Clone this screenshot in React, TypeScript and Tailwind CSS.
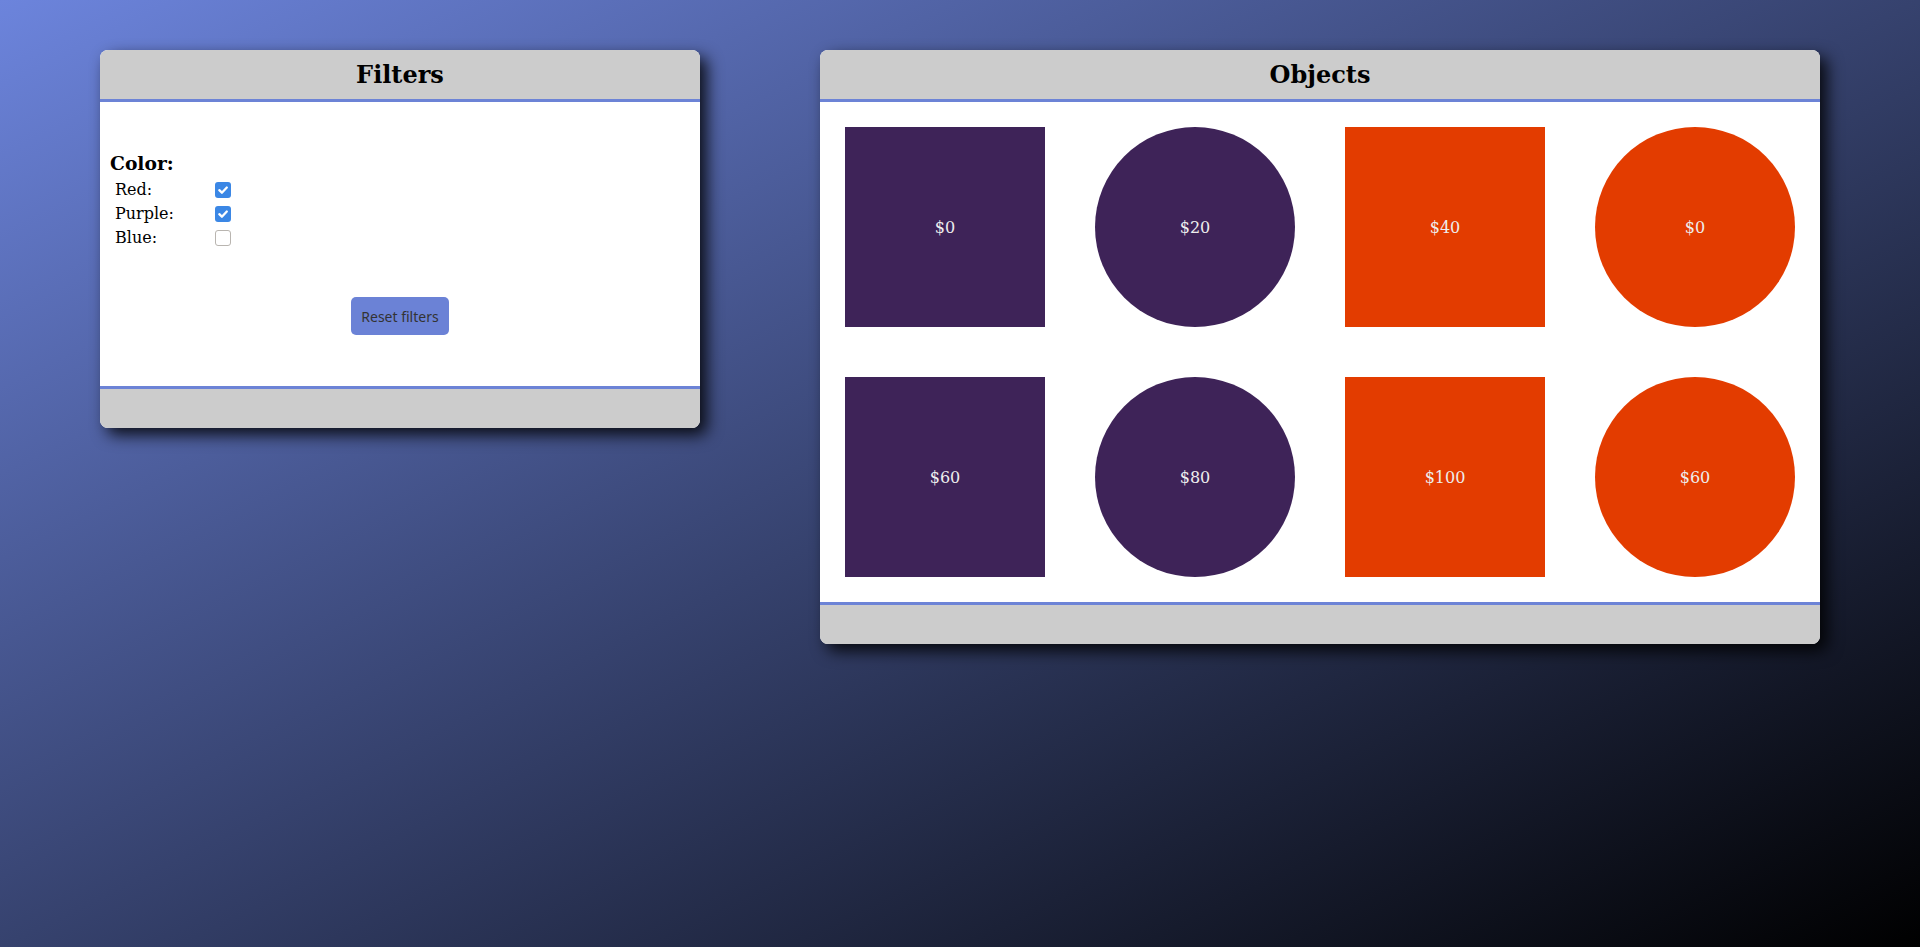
import { useState } from 'react';

type Shape = { kind: 'square' | 'circle'; color: 'purple' | 'red'; price: number };

const objects: Shape[] = [
  { kind: 'square', color: 'purple', price: 0 },
  { kind: 'circle', color: 'purple', price: 20 },
  { kind: 'square', color: 'red', price: 40 },
  { kind: 'circle', color: 'red', price: 0 },
  { kind: 'square', color: 'purple', price: 60 },
  { kind: 'circle', color: 'purple', price: 80 },
  { kind: 'square', color: 'red', price: 100 },
  { kind: 'circle', color: 'red', price: 60 },
];

function Check({ checked, onChange }: { checked: boolean; onChange: () => void }) {
  return (
    <button
      onClick={onChange}
      className={
        checked
          ? 'w-[16px] h-[16px] rounded-[3px] bg-[#3b87e5] flex items-center justify-center'
          : 'w-[16px] h-[16px] rounded-[3px] bg-white border border-[#b9b5b0]'
      }
    >
      {checked && (
        <svg width="12" height="12" viewBox="0 0 12 12">
          <path d="M2.3 6.2 L4.9 8.7 L9.8 3.5" fill="none" stroke="white" strokeWidth="2.3" strokeLinecap="round" strokeLinejoin="round" />
        </svg>
      )}
    </button>
  );
}

function Panel({ title, width, children }: { title: string; width: string; children: React.ReactNode }) {
  return (
    <div className={`${width} rounded-lg overflow-hidden bg-white shadow-[7px_7px_16px_rgba(0,0,0,0.85)]`}>
      <div className="h-[49px] bg-[#cccccc] flex items-center justify-center border-b-[3px] border-[#6c83d6] box-content">
        <h2 className="text-[24px] font-bold text-black leading-none">{title}</h2>
      </div>
      {children}
      <div className="h-[39px] bg-[#cccccc] border-t-[3px] border-[#6c83d6] box-content" />
    </div>
  );
}

export default function App() {
  const [colors, setColors] = useState({ Red: true, Purple: true, Blue: false });
  const toggle = (k: keyof typeof colors) => setColors(c => ({ ...c, [k]: !c[k] }));

  return (
    <div
      className="w-full h-screen flex items-start gap-[120px] pl-[100px] pt-[50px] bg-[linear-gradient(to_bottom_right,#6c84dc,#000000)] text-black"
      style={{ fontFamily: '"DejaVu Serif", serif' }}
    >
      <Panel title="Filters" width="w-[600px]">
        <div className="h-[284px] px-[10px] pt-[50px]">
          <h3 className="text-[18.72px] font-bold leading-[22px]">Color:</h3>
          <div className="pl-[5px] pt-[4px]">
            {(Object.keys(colors) as (keyof typeof colors)[]).map(k => (
              <div key={k} className="flex items-center h-[24px] text-[16px]">
                <span className="w-[100px]">{k}:</span>
                <Check checked={colors[k]} onChange={() => toggle(k)} />
              </div>
            ))}
          </div>
          <div className="flex justify-center mt-[47px]">
            <button
              onClick={() => setColors({ Red: false, Purple: false, Blue: false })}
              className="h-[38px] px-[10px] rounded-[5px] bg-[#6b82d6] text-[#333] text-[14px]"
              style={{ fontFamily: '"Noto Sans", sans-serif' }}
            >
              Reset filters
            </button>
          </div>
        </div>
      </Panel>

      <Panel title="Objects" width="w-[1000px]">
        <div className="h-[500px] flex flex-wrap">
          {objects.map((o, i) => (
            <div
              key={i}
              className={`w-[200px] h-[200px] m-[25px] pt-[2px] flex items-center justify-center text-[16px] text-[#eeeeee] ${
                o.kind === 'circle' ? 'rounded-full' : ''
              } ${o.color === 'red' ? 'bg-[#e33c00]' : 'bg-[#3e2358]'}`}
            >
              ${o.price}
            </div>
          ))}
        </div>
      </Panel>
    </div>
  );
}
